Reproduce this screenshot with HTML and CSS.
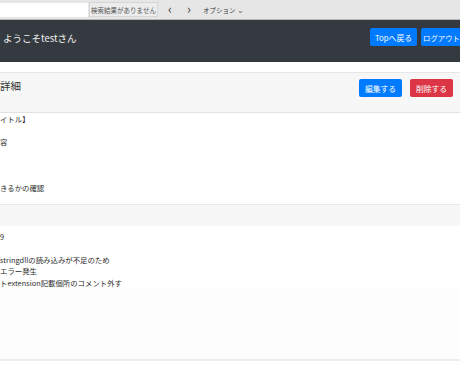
FILE: index.html
```html
<!DOCTYPE html>
<html lang="ja">
<head>
    <meta charset="UTF-8">
    <title>詳細</title>
    <link rel="stylesheet" href="styles.css">
</head>
<body>
    <div class="findbar">
        <input class="find-input" type="text" value="">
        <div class="find-result">検索結果がありません</div>
        <span class="find-arrow">&lsaquo;</span>
        <span class="find-arrow next">&rsaquo;</span>
        <span class="find-option">オプション <span class="caret">&#8964;</span></span>
    </div>

    <div class="navbar">
        <span class="welcome">ようこそtestさん</span>
        <div class="nav-buttons">
            <a class="btn btn-primary btn-top">Topへ戻る</a>
            <a class="btn btn-primary btn-logout">ログアウト</a>
        </div>
    </div>

    <div class="page">
        <div class="card">
            <div class="card-header">
                <span class="card-title">詳細</span>
                <div class="header-buttons">
                    <a class="btn btn-primary">編集する</a>
                    <a class="btn btn-danger">削除する</a>
                </div>
            </div>
            <div class="card-body first">
                <p>イトル】</p>
                <p>&nbsp;</p>
                <p>容</p>
                <p>&nbsp;</p>
                <p>&nbsp;</p>
                <p>&nbsp;</p>
                <p>きるかの確認</p>
            </div>
            <div class="card-sub"></div>
            <div class="card-body second">
                <p>9</p>
                <p>&nbsp;</p>
                <p>stringdllの読み込みが不足のため</p>
                <p>エラー発生</p>
                <p>トextension記載個所のコメント外す</p>
            </div>
            <div class="card-foot"></div>
        </div>
    </div>
</body>
</html>
```

FILE: styles.css
```css
html, body {
    margin: 0;
    padding: 0;
    overflow: hidden;
}

body {
    font-family: "Noto Sans CJK JP", "Noto Sans", sans-serif;
    color: #212529;
    background: #fff;
    width: 460px;
    height: 380px;
}

/* browser find bar */
.findbar {
    height: 19px;
    background: #e6e6e6;
    border-bottom: 1px solid #b9b9b9;
    display: flex;
    align-items: center;
    font-size: 6.5px;
    color: #333;
}

.find-input {
    width: 88px;
    height: 14px;
    border: none;
    background: #fff;
    padding: 0;
    margin: 0;
}

.find-result {
    width: 69px;
    height: 15px;
    margin-left: 1px;
    background: #ececec;
    border: 1px solid #d6d6d6;
    box-sizing: border-box;
    display: flex;
    align-items: center;
    justify-content: center;
    color: #555;
}

.find-arrow {
    font-size: 13px;
    color: #444;
    margin-left: 10px;
    line-height: 1;
    padding-bottom: 2px;
}

.find-arrow.next {
    margin-left: 15px;
}

.find-option {
    margin-left: 12px;
}

.caret {
    font-size: 8px;
    color: #666;
}

/* top navbar */
.navbar {
    height: 42px;
    background: #343a40;
    display: flex;
    align-items: center;
    justify-content: space-between;
    padding-left: 3px;
}

.welcome {
    color: #f2f2f2;
    font-size: 9.5px;
    margin-top: -6px;
}

.nav-buttons {
    display: flex;
    gap: 4px;
    margin-top: -8px;
}

.btn {
    display: inline-flex;
    align-items: center;
    justify-content: center;
    height: 18px;
    padding: 0 5px;
    border-radius: 2px;
    color: #fff;
    font-size: 7.8px;
    box-sizing: border-box;
}

.btn-top {
    width: 47px;
    padding: 0;
}

.btn-logout {
    width: 39px;
    padding: 0 0 0 2px;
    font-size: 7.4px;
    justify-content: flex-start;
    border-radius: 2px 0 0 2px;
}

.btn-primary {
    background: #007bff;
}

.btn-danger {
    background: #dc3545;
}

/* page content */
.page {
    padding-top: 10px;
}

.card {
    border-top: 1px solid #e6e6e6;
}

.card-header {
    height: 39px;
    background: #f7f7f7;
    border-bottom: 1px solid #e2e2e2;
    display: flex;
    justify-content: space-between;
    align-items: flex-start;
    padding-right: 7px;
}

.card-title {
    font-size: 10.5px;
    margin-top: 5px;
    color: #333;
}

.header-buttons {
    display: flex;
    gap: 8px;
    margin-top: 6px;
}

.header-buttons .btn {
    width: 43px;
    padding: 0;
}

.card-body {
    font-size: 7.4px;
    color: #2b2b2b;
}

.card-body.first {
    padding: 0 0 10px 0;
}

.card-body.second {
    padding: 5px 0 0 0;
}

.card-body p {
    margin: 0;
    line-height: 11.5px;
}

.card-sub {
    height: 21px;
    background: #f7f7f7;
    border-top: 1px solid #e9e9e9;
}

.card-foot {
    height: 71px;
    background: #fdfdfd;
    border-bottom: 2px solid #ececec;
}
```
